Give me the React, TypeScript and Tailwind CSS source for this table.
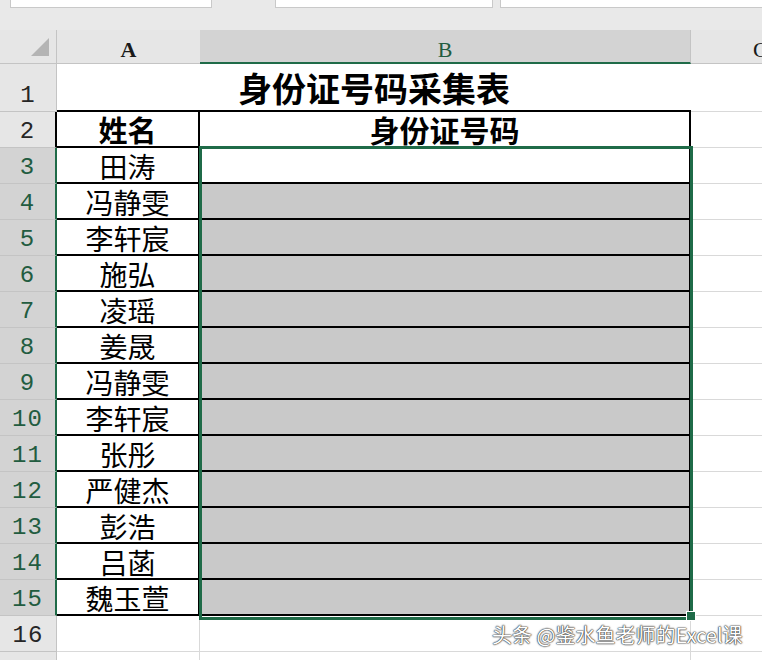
const names = [
  "田涛",
  "冯静雯",
  "李轩宸",
  "施弘",
  "凌瑶",
  "姜晟",
  "冯静雯",
  "李轩宸",
  "张彤",
  "严健杰",
  "彭浩",
  "吕菡",
  "魏玉萱",
];

const cjk = "font-['Noto_Sans_CJK_SC',sans-serif]";

function RowHead({ n, state }: { n?: number; state: "plain" | "black" | "sel" }) {
  const cls =
    state === "sel"
      ? "bg-[#d3d3d3] text-[#225c40] border-r-2 border-r-[#1f6b48]"
      : state === "black"
        ? "bg-[#e6e6e6] text-[#262626] border-r-2 border-r-black"
        : "bg-[#e6e6e6] text-[#262626] border-r border-r-[#c4c4c4]";
  return (
    <div
      className={`w-[57px] shrink-0 flex items-end justify-center pb-[3px] border-b border-b-[#c4c4c4] font-['Liberation_Mono',monospace] text-[24px] leading-[24px] tracking-[1px] ${cls}`}
    >
      {n}
    </div>
  );
}

function Gridcell({ w }: { w: string }) {
  return <div className={`${w} shrink-0 border-r border-b border-[#d9d9d9] bg-white`} />;
}

export default function App() {
  return (
    <div className="relative w-[762px] h-[660px] overflow-hidden bg-white">
      {/* toolbar strip */}
      <div className="h-[30px] bg-[#e9e9e9] relative">
        <div className="absolute left-[10px] top-[-2px] w-[202px] h-[10px] bg-white border border-[#c9c9c9]" />
        <div className="absolute left-[275px] top-[-2px] w-[218px] h-[10px] bg-white border border-[#c9c9c9]" />
        <div className="absolute left-[500px] top-[-2px] w-[270px] h-[10px] bg-white border border-[#c9c9c9]" />
      </div>

      {/* column headers */}
      <div className="flex h-[34px] font-['Liberation_Serif',serif] text-[22px] leading-[22px]">
        <div className="w-[57px] shrink-0 bg-[#e6e6e6] border-r border-b border-[#c4c4c4] flex items-end justify-end pr-[7px] pb-[7px]">
          <svg width="18" height="18" viewBox="0 0 18 18">
            <polygon points="18,0 18,18 0,18" fill="#b4b4b4" />
          </svg>
        </div>
        <div className="w-[143px] shrink-0 bg-[#e6e6e6] border-b border-[#c4c4c4] flex items-end justify-center pb-[2px] text-[#1a1a1a] font-bold">
          A
        </div>
        <div className="w-[491px] shrink-0 bg-[#d3d3d3] border-r border-r-[#c4c4c4] border-b-2 border-b-[#1f6b48] flex items-end justify-center pb-[1px] text-[#225c40]">
          B
        </div>
        <div className="w-[140px] shrink-0 bg-[#e6e6e6] border-r border-b border-[#c4c4c4] flex items-end justify-start pl-[62px] pb-[2px] text-[#1a1a1a]">
          C
        </div>
      </div>

      {/* row 1 */}
      <div className="flex h-[48px]">
        <RowHead n={1} state="plain" />
        <div
          className={`w-[634px] shrink-0 border-b-2 border-black flex items-end justify-center pb-[4px] ${cjk} text-[34px] leading-[36px] font-bold text-black`}
        >
          身份证号码采集表
        </div>
        <Gridcell w="w-[140px]" />
      </div>

      {/* row 2 */}
      <div className="flex h-[36px]">
        <RowHead n={2} state="black" />
        <div
          className={`w-[143px] shrink-0 border-r-2 border-b-2 border-black flex items-center justify-center ${cjk} text-[29px] leading-[30px] font-bold`}
        >
          姓名
        </div>
        <div
          className={`w-[491px] shrink-0 border-r-2 border-b-2 border-black flex items-center justify-center ${cjk} text-[30px] leading-[30px] font-bold`}
        >
          身份证号码
        </div>
        <Gridcell w="w-[140px]" />
      </div>

      {/* data rows */}
      {names.map((name, i) => (
        <div key={i} className="flex h-[36px]">
          <RowHead n={i + 3} state="sel" />
          <div
            className={`w-[143px] shrink-0 border-r-2 border-b-2 border-black bg-white flex items-center justify-center pt-[2px] ${cjk} text-[28px] leading-[30px] text-black`}
          >
            {name}
          </div>
          <div
            className={`w-[491px] shrink-0 border-r-2 border-b-2 border-black ${i === 0 ? "bg-white" : "bg-[#c9c9c9]"}`}
          />
          <Gridcell w="w-[140px]" />
        </div>
      ))}

      {/* row 16, 17 */}
      {[16, 17].map((n) => (
        <div key={n} className="flex h-[36px]">
          <RowHead n={n === 16 ? n : undefined} state="plain" />
          <Gridcell w="w-[143px]" />
          <Gridcell w="w-[491px]" />
          <Gridcell w="w-[140px]" />
        </div>
      ))}

      {/* selection frame */}
      <div className="absolute left-[199px] top-[146px] w-[494px] h-[474px] border-[3px] border-[#1f6b48] pointer-events-none" />
      <div className="absolute left-[686px] top-[611px] w-[10px] h-[10px] bg-[#1f6b48] border border-white" />

      {/* watermark */}
      <div
        className={`absolute left-[492px] top-[623px] ${cjk} text-[20px] leading-[24px] text-white [text-shadow:0_0_2px_#333,0_0_1px_#333,0_0_1px_#333]`}
      >
        头条 @鉴水鱼老师的Excel课
      </div>
    </div>
  );
}
